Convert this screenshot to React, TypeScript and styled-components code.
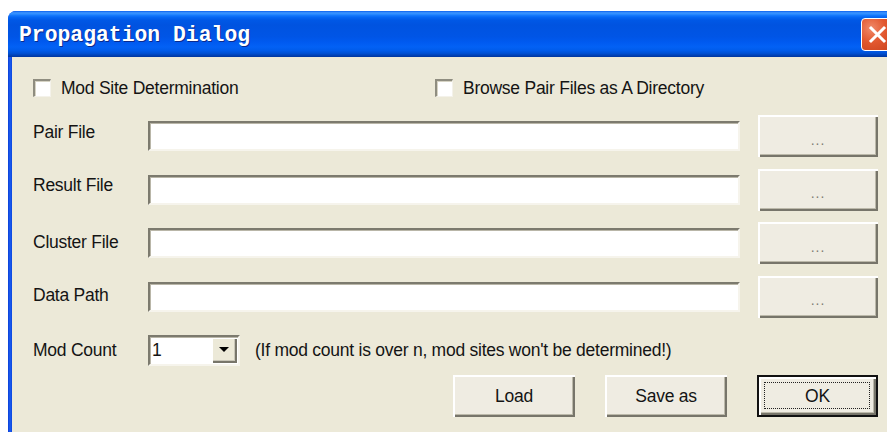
import React from 'react';
import styled, { createGlobalStyle } from 'styled-components';

const UI_FONT = `"Liberation Sans", Arial, sans-serif`;
const FACE = '#ECE9D8';

const GlobalStyle = createGlobalStyle`
  html, body {
    margin: 0;
    padding: 0;
    background: #ffffff;
    overflow: hidden;
  }
  body {
    width: 887px;
    height: 432px;
  }
`;

const Window = styled.div`
  margin: 11px 0 0 8px;
  width: 892px;
  height: 421px;
  display: flex;
  flex-direction: column;
  border-radius: 8px 8px 0 0;
  overflow: hidden;
  background: linear-gradient(to right, #0a3ed6 0px, #1c5cf0 2px, #0b46de 4px);
`;

const TitleBar = styled.div`
  height: 46px;
  flex: none;
  display: flex;
  align-items: center;
  justify-content: space-between;
  padding: 0 0 0 11px;
  background: linear-gradient(
    to bottom,
    #0a5fee 0%,
    #3d95ff 4%,
    #2a8aff 7%,
    #1276fb 10%,
    #0565f2 14%,
    #0058e6 20%,
    #0053e0 30%,
    #0055e6 56%,
    #005af0 68%,
    #0361f5 78%,
    #005bea 86%,
    #0050d4 92%,
    #0042b8 96%,
    #00359e 100%
  );
`;

const Title = styled.span`
  font-family: "Liberation Mono", "DejaVu Sans Mono", monospace;
  font-weight: bold;
  font-size: 21.4px;
  color: #ffffff;
  text-shadow: 1px 1px 0 #0b2a8c;
  margin-top: 2px;
`;

const CloseButton = styled.div`
  width: 33px;
  height: 33px;
  margin-right: 6px;
  border-radius: 4px;
  border: 1px solid #ffffff;
  box-sizing: border-box;
  background: radial-gradient(circle at 30% 30%, #f08a6a 0%, #e2582f 45%, #c9401b 100%);
  display: flex;
  align-items: center;
  justify-content: center;
`;

const Content = styled.div`
  flex: 1;
  margin-left: 4px;
  background: ${FACE};
  padding: 22px 0 0 21px;
  font-family: ${UI_FONT};
  font-size: 17.5px;
  letter-spacing: -0.25px;
  color: #141414;
`;

const TopRow = styled.div`
  display: flex;
  align-items: center;
  height: 18px;
`;

const CheckLabel = styled.label<{ $width?: number }>`
  display: flex;
  align-items: center;
  gap: 10px;
  width: ${(p) => (p.$width ? `${p.$width}px` : 'auto')};
  white-space: nowrap;
  padding-top: 1px;
`;

const CheckBox = styled.span`
  width: 18px;
  height: 18px;
  box-sizing: border-box;
  background: #ffffff;
  border-top: 2px solid #8f8d80;
  border-left: 2px solid #8f8d80;
  border-right: 1px solid #f4f2ea;
  border-bottom: 1px solid #f4f2ea;
  box-shadow: inset 1px 1px 0 #d6d3c4;
  flex: none;
  margin-top: -1px;
`;

const FieldGrid = styled.div`
  margin-top: 18px;
  display: grid;
  grid-template-columns: 97px 592px 120px;
  grid-auto-rows: 42px;
  column-gap: 18px;
  row-gap: 11.5px;
  align-items: center;
`;

const Label = styled.span<{ $lift?: number }>`
  white-space: nowrap;
  transform: translateY(${(p) => -(p.$lift ?? 0)}px);
`;

const Sunken = styled.div`
  box-sizing: border-box;
  background: #ffffff;
  border-top: 2px solid #7c7a6e;
  border-left: 2px solid #7c7a6e;
  border-right: 2px solid #f6f4ec;
  border-bottom: 2px solid #f6f4ec;
  box-shadow: inset 1px 1px 0 #b9b6a8;
`;

const TextField = styled(Sunken)`
  height: 30px;
`;

const RaisedButton = styled.button<{ $default?: boolean; $width?: number }>`
  position: relative;
  width: ${(p) => (p.$width ? `${p.$width}px` : '100%')};
  height: 42px;
  padding: 0;
  margin: 0;
  font-family: ${UI_FONT};
  font-size: 17.5px;
  letter-spacing: -0.25px;
  color: #141414;
  background: #efece2;
  border: ${(p) => (p.$default ? '2px solid #111111' : 'none')};
  box-sizing: border-box;
  box-shadow:
    inset 2px 2px 0 #ffffff,
    inset -2px -2px 0 #77756a,
    inset -3px -3px 0 #bcb9aa;
  cursor: default;

  &::after {
    content: '';
    display: ${(p) => (p.$default ? 'block' : 'none')};
    position: absolute;
    inset: 5px 6px 6px 5px;
    border: 1px dotted #222222;
  }
`;

const Dots = styled.span`
  font-size: 14px;
  color: #7e7c74;
  letter-spacing: 1px;
  position: relative;
  top: 3px;
`;

const CountRow = styled.div`
  display: flex;
  align-items: center;
  gap: 15px;
  grid-column: 2 / span 2;
`;

const Combo = styled(Sunken)`
  width: 92px;
  height: 31px;
  display: flex;
  align-items: stretch;
  justify-content: space-between;
  padding: 1px 1px 1px 2px;
`;

const ComboValue = styled.span`
  display: flex;
  align-items: center;
`;

const ComboArrow = styled.span`
  width: 25px;
  background: ${FACE};
  box-shadow:
    inset 1px 1px 0 #ffffff,
    inset -2px -2px 0 #77756a,
    inset -3px -3px 0 #c9c6b8;
  display: flex;
  align-items: center;
  justify-content: center;

  &::before {
    content: '';
    border-left: 5px solid transparent;
    border-right: 5px solid transparent;
    border-top: 5px solid #000000;
    margin: 0 2px 1px 0;
  }
`;

const Note = styled.span`
  white-space: nowrap;
`;

const ButtonRow = styled.div`
  margin-top: 4px;
  width: 845px;
  display: flex;
  justify-content: flex-end;
  gap: 30px;
`;

const fields = [
  { label: 'Pair File', lift: 4 },
  { label: 'Result File', lift: 4 },
  { label: 'Cluster File', lift: 1 },
  { label: 'Data Path', lift: 1 },
];

export default function App() {
  return (
    <>
      <GlobalStyle />
      <Window>
        <TitleBar>
          <Title>Propagation Dialog</Title>
          <CloseButton>
            <svg width="19" height="19" viewBox="0 0 19 19">
              <path d="M3 3 L16 16 M16 3 L3 16" stroke="#ffffff" strokeWidth="3" strokeLinecap="square" />
            </svg>
          </CloseButton>
        </TitleBar>
        <Content>
          <TopRow>
            <CheckLabel $width={402}>
              <CheckBox />
              Mod Site Determination
            </CheckLabel>
            <CheckLabel>
              <CheckBox />
              Browse Pair Files as A Directory
            </CheckLabel>
          </TopRow>
          <FieldGrid>
            {fields.map((f) => (
              <React.Fragment key={f.label}>
                <Label $lift={f.lift}>{f.label}</Label>
                <TextField />
                <RaisedButton>
                  <Dots>...</Dots>
                </RaisedButton>
              </React.Fragment>
            ))}
            <Label>Mod Count</Label>
            <CountRow>
              <Combo>
                <ComboValue>1</ComboValue>
                <ComboArrow />
              </Combo>
              <Note>(If mod count is over n, mod sites won't be determined!)</Note>
            </CountRow>
          </FieldGrid>
          <ButtonRow>
            <RaisedButton $width={122}>Load</RaisedButton>
            <RaisedButton $width={122}>Save as</RaisedButton>
            <RaisedButton $width={121} $default>
              OK
            </RaisedButton>
          </ButtonRow>
        </Content>
      </Window>
    </>
  );
}
